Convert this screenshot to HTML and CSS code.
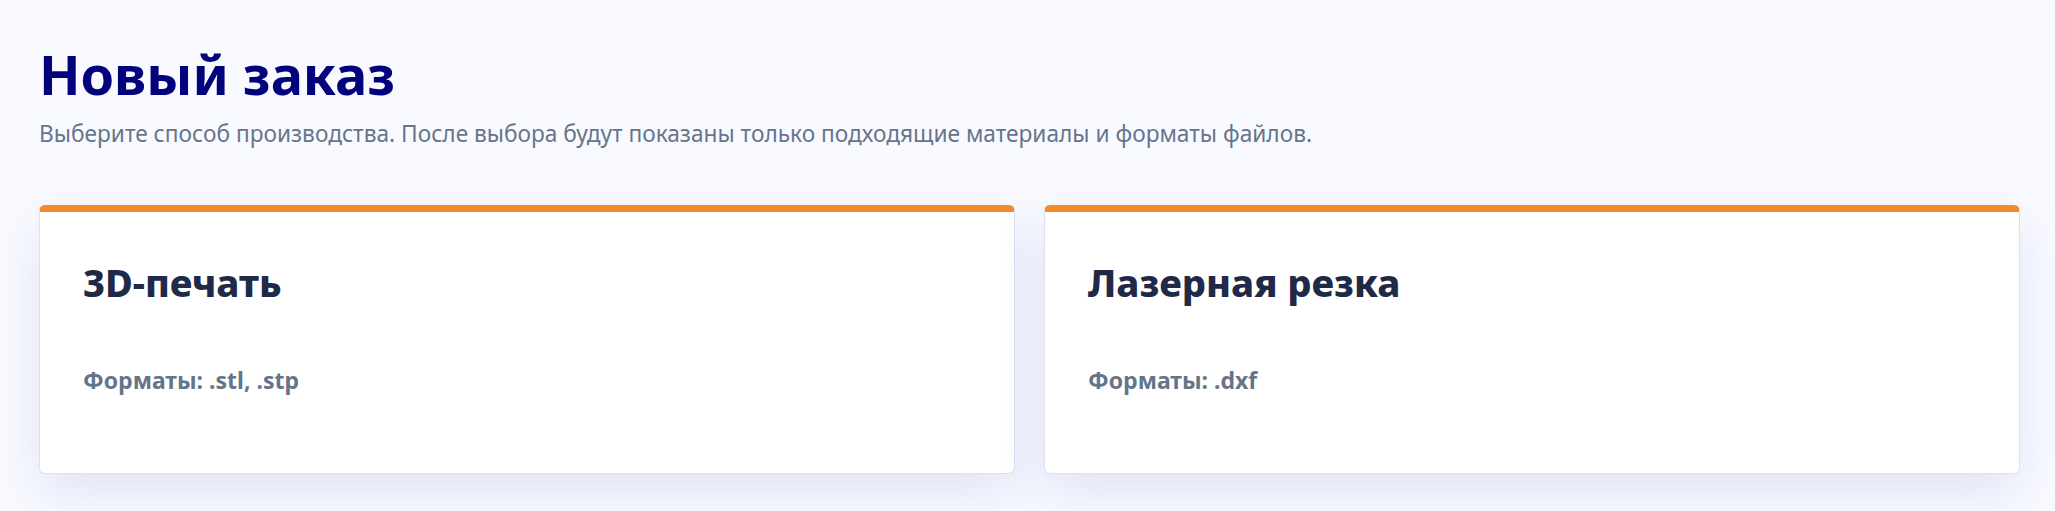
FILE: index.html
```html
<!DOCTYPE html>
<html>
<head>
  <meta charset="utf-8">
  <title>Новый заказ</title>
  <link rel="stylesheet" href="styles.css">
</head>
<body>
  <div class="page">
    <h1>Новый заказ</h1>
    <p class="lead">Выберите способ производства. После выбора будут показаны только подходящие материалы и форматы файлов.</p>

    <div class="methods">
      <div class="card">
        <h2>3D-печать</h2>
        <div class="formats">Форматы: .stl, .stp</div>
      </div>
      <div class="card">
        <h2>Лазерная резка</h2>
        <div class="formats">Форматы: .dxf</div>
      </div>
    </div>
  </div>
</body>
</html>
```

FILE: styles.css
```css
body {
  margin: 0;
  background: #f9faff;
  font-family: "Noto Sans", "Open Sans", sans-serif;
}

.page {
  padding: 42px 35px 37px 39px;
}

h1 {
  margin: 0;
  font-size: 54px;
  line-height: 1.2;
  font-weight: 700;
  color: #02027c;
}

.lead {
  margin: 12px 0 0;
  font-size: 22.7px;
  line-height: 30px;
  color: #66758c;
}

.methods {
  display: grid;
  grid-template-columns: 1fr 1fr;
  gap: 29px;
  margin-top: 56px;
}

.card {
  box-sizing: border-box;
  height: 269px;
  padding: 48px 43px 0;
  background: #fff;
  border: 1px solid #dde0f3;
  border-top: 7px solid #f28c2b;
  border-radius: 6px;
  box-shadow: 0 20px 50px rgba(80, 90, 200, 0.14);
}

.card h2 {
  margin: 0;
  font-size: 38px;
  line-height: 1.2;
  font-weight: 800;
  color: #1e2a47;
}

.formats {
  margin-top: 59px;
  font-size: 23px;
  line-height: 1.4;
  font-weight: 700;
  color: #64748b;
}
```
